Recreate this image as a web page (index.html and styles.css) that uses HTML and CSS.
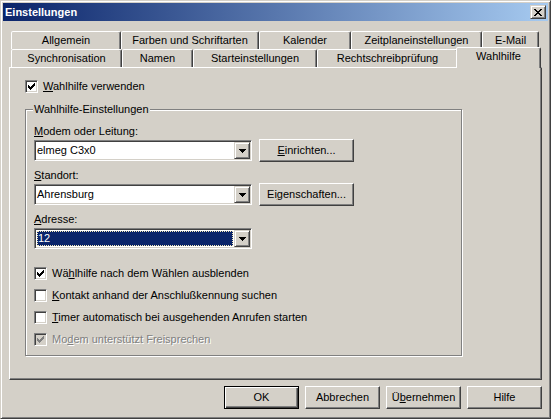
FILE: index.html
```html
<!DOCTYPE html>
<html lang="de">
<head>
<meta charset="utf-8">
<title>Einstellungen</title>
<link rel="stylesheet" href="styles.css">
</head>
<body>
<div class="window">
  <div class="titlebar">
    <span class="title">Einstellungen</span>
    <span class="close"><svg width="8" height="7" viewBox="0 0 8 7"><path d="M0 0h2v1H0zM6 0h2v1H6zM1 1h2v1H1zM5 1h2v1H5zM2 2h4v1H2zM3 3h2v1H3zM2 4h4v1H2zM1 5h2v1H1zM5 5h2v1H5zM0 6h2v1H0zM6 6h2v1H6z"/></svg></span>
  </div>

  <div class="tabs">
    <div class="tabrow">
      <div class="tab t-allg">Allgemein</div>
      <div class="tab t-farb">Farben und Schriftarten</div>
      <div class="tab t-kal">Kalender</div>
      <div class="tab t-zeit">Zeitplaneinstellungen</div>
      <div class="tab t-mail">E-Mail</div>
    </div>
    <div class="tabrow">
      <div class="tab t-sync">Synchronisation</div>
      <div class="tab t-nam">Namen</div>
      <div class="tab t-start">Starteinstellungen</div>
      <div class="tab t-recht">Rechtschreibprüfung</div>
      <div class="tab t-wahl selected">Wahlhilfe</div>
    </div>
  </div>

  <div class="panel">
    <div class="check">
      <span class="box"><svg width="7" height="7" viewBox="0 0 7 7"><path d="M0 2h1v3H0zM1 3h1v3H1zM2 4h1v3H2zM3 3h1v3H3zM4 2h1v3H4zM5 1h1v3H5zM6 0h1v3H6z"/></svg></span>
      <span><u>W</u>ahlhilfe verwenden</span>
    </div>

    <div class="group">
      <span class="legend">Wahlhilfe-Einstellungen</span>

      <div class="label"><u>M</u>odem oder Leitung:</div>
      <div class="row">
        <div class="combo">
          <span class="value">elmeg C3x0</span>
          <span class="drop"><svg width="7" height="4" viewBox="0 0 7 4"><path d="M0 0h7v1H0zM1 1h5v1H1zM2 2h3v1H2zM3 3h1v1H3z"/></svg></span>
        </div>
        <div class="btn side"><u>E</u>inrichten...</div>
      </div>

      <div class="label gap"><u>S</u>tandort:</div>
      <div class="row">
        <div class="combo">
          <span class="value">Ahrensburg</span>
          <span class="drop"><svg width="7" height="4" viewBox="0 0 7 4"><path d="M0 0h7v1H0zM1 1h5v1H1zM2 2h3v1H2zM3 3h1v1H3z"/></svg></span>
        </div>
        <div class="btn side">Ei<u>g</u>enschaften...</div>
      </div>

      <div class="label gap"><u>A</u>dresse:</div>
      <div class="row">
        <div class="combo">
          <span class="value sel">12</span>
          <span class="drop"><svg width="7" height="4" viewBox="0 0 7 4"><path d="M0 0h7v1H0zM1 1h5v1H1zM2 2h3v1H2zM3 3h1v1H3z"/></svg></span>
        </div>
      </div>

      <div class="checks">
        <div class="check">
          <span class="box"><svg width="7" height="7" viewBox="0 0 7 7"><path d="M0 2h1v3H0zM1 3h1v3H1zM2 4h1v3H2zM3 3h1v3H3zM4 2h1v3H4zM5 1h1v3H5zM6 0h1v3H6z"/></svg></span>
          <span>Wä<u>h</u>lhilfe nach dem Wählen ausblenden</span>
        </div>
        <div class="check">
          <span class="box"></span>
          <span><u>K</u>ontakt anhand der Anschlußkennung suchen</span>
        </div>
        <div class="check">
          <span class="box"></span>
          <span><u>T</u>imer automatisch bei ausgehenden Anrufen starten</span>
        </div>
        <div class="check disabled">
          <span class="box"><svg width="7" height="7" viewBox="0 0 7 7"><path d="M0 2h1v3H0zM1 3h1v3H1zM2 4h1v3H2zM3 3h1v3H3zM4 2h1v3H4zM5 1h1v3H5zM6 0h1v3H6z"/></svg></span>
          <span>Mo<u>d</u>em unterstützt Freisprechen</span>
        </div>
      </div>
    </div>
  </div>

  <div class="buttons">
    <div class="btn default">OK</div>
    <div class="btn">Abbrechen</div>
    <div class="btn">Ü<u>b</u>ernehmen</div>
    <div class="btn">Hilfe</div>
  </div>
</div>
</body>
</html>
```

FILE: styles.css
```css
html, body {
  margin: 0;
  padding: 0;
  background: #d4d0c8;
}

body {
  font-family: "Liberation Sans", Arial, sans-serif;
  font-size: 11px;
  color: #000;
}

u {
  text-decoration: underline;
  text-underline-offset: 1px;
}

.window {
  box-sizing: border-box;
  width: 551px;
  height: 419px;
  padding: 2px;
  border: 1px solid;
  border-color: #d4d0c8 #404040 #404040 #d4d0c8;
  box-shadow: inset 1px 1px #fff, inset -1px -1px #808080;
  background: #d4d0c8;
}

/* title bar */
.titlebar {
  height: 18px;
  display: flex;
  align-items: center;
  padding: 0 2px;
  background: linear-gradient(to right, #0a246a, #a6caf0);
}

.title {
  color: #fff;
  font-weight: bold;
  line-height: 18px;
}

.close {
  box-sizing: border-box;
  margin-left: auto;
  width: 16px;
  height: 14px;
  display: flex;
  align-items: center;
  justify-content: center;
  background: #d4d0c8;
  border: 1px solid;
  border-color: #d4d0c8 #404040 #404040 #d4d0c8;
  box-shadow: inset 1px 1px #fff, inset -1px -1px #808080;
}

.close svg {
  display: block;
  margin-left: -1px;
}

/* tabs */
.tabs {
  margin-top: 10px;
  padding-left: 8px;
}

.tabrow {
  display: flex;
  height: 18px;
  align-items: flex-start;
}

.tab {
  box-sizing: border-box;
  height: 18px;
  border: 1px solid;
  border-bottom: 0;
  border-color: #fff #404040 transparent #fff;
  border-top-left-radius: 2px;
  border-top-right-radius: 2px;
  box-shadow: inset -1px 0 #808080;
  background: #d4d0c8;
  text-align: center;
  line-height: 17px;
  white-space: nowrap;
}

.t-allg { width: 110px; }
.t-farb { width: 138px; }
.t-kal { width: 92px; }
.t-zeit { width: 131px; }
.t-mail { width: 57px; }
.t-sync { width: 111px; }
.t-nam { width: 71px; }
.t-start { width: 124px; }
.t-recht { width: 141px; }
.t-wahl { width: 81px; }

.tab.selected {
  position: relative;
  z-index: 1;
  width: 85px;
  height: 21px;
  margin: -2px -2px 0 -2px;
  line-height: 17px;
}

/* page */
.panel {
  box-sizing: border-box;
  width: 533px;
  height: 313px;
  margin-left: 6px;
  padding: 12px 0 0 15px;
  border: 1px solid;
  border-color: #fff #404040 #404040 #fff;
  box-shadow: inset -1px -1px #808080;
}

.check {
  display: flex;
  align-items: center;
  gap: 5px;
  height: 13px;
  line-height: 13px;
  white-space: nowrap;
}

.box {
  box-sizing: border-box;
  flex: none;
  width: 13px;
  height: 13px;
  padding: 2px 0 0 2px;
  background: #fff;
  border: 1px solid;
  border-color: #808080 #fff #fff #808080;
  box-shadow: inset 1px 1px #404040, inset -1px -1px #d4d0c8;
}

.box svg {
  display: block;
  fill: #000;
}

.check.disabled {
  color: #808080;
  text-shadow: 1px 1px 0 #fff;
}

.check.disabled .box {
  background: #d4d0c8;
}

.check.disabled .box svg {
  fill: #808080;
}

.group {
  position: relative;
  box-sizing: border-box;
  width: 437px;
  height: 247px;
  margin-top: 16px;
  padding: 15px 0 0 8px;
  border: 1px solid #808080;
  box-shadow: 1px 1px 0 #fff, inset 1px 1px 0 #fff;
}

.legend {
  position: absolute;
  top: -7px;
  left: 7px;
  padding: 0 1px;
  line-height: 13px;
  background: #d4d0c8;
}

.label {
  line-height: 13px;
  height: 13px;
}

.label.gap {
  margin-top: 7px;
}

.row {
  display: flex;
  align-items: center;
  height: 23px;
  margin-top: 1px;
}

.combo {
  box-sizing: border-box;
  display: flex;
  width: 218px;
  height: 21px;
  padding: 1px;
  background: #fff;
  border: 1px solid;
  border-color: #808080 #fff #fff #808080;
  box-shadow: inset 1px 1px #404040, inset -1px -1px #d4d0c8;
}

.value {
  flex: 1;
  padding-left: 1px;
  line-height: 17px;
  white-space: nowrap;
}

.value.sel {
  margin: 1px;
  padding-left: 0;
  border: 1px dotted #f4e8b8;
  background: #0a246a;
  color: #fff;
  line-height: 13px;
}

.drop {
  box-sizing: border-box;
  flex: none;
  width: 16px;
  height: 17px;
  display: flex;
  align-items: center;
  justify-content: center;
  background: #d4d0c8;
  border: 1px solid;
  border-color: #d4d0c8 #404040 #404040 #d4d0c8;
  box-shadow: inset 1px 1px #fff, inset -1px -1px #808080;
}

.drop svg {
  display: block;
  margin-left: 1px;
}

.btn {
  box-sizing: border-box;
  width: 75px;
  height: 23px;
  border: 1px solid;
  border-color: #fff #404040 #404040 #fff;
  box-shadow: inset -1px -1px #808080;
  background: #d4d0c8;
  text-align: center;
  line-height: 21px;
  white-space: nowrap;
}

.btn.side {
  width: 95px;
  margin-left: 7px;
}

.btn.default {
  border-color: #000;
  box-shadow: inset 1px 1px #fff, inset -1px -1px #404040, inset -2px -2px #808080;
}

.checks {
  margin-top: 17px;
  display: flex;
  flex-direction: column;
  gap: 9px;
}

.buttons {
  display: flex;
  justify-content: flex-end;
  gap: 6px;
  margin-top: 6px;
  padding-right: 6px;
}
```
